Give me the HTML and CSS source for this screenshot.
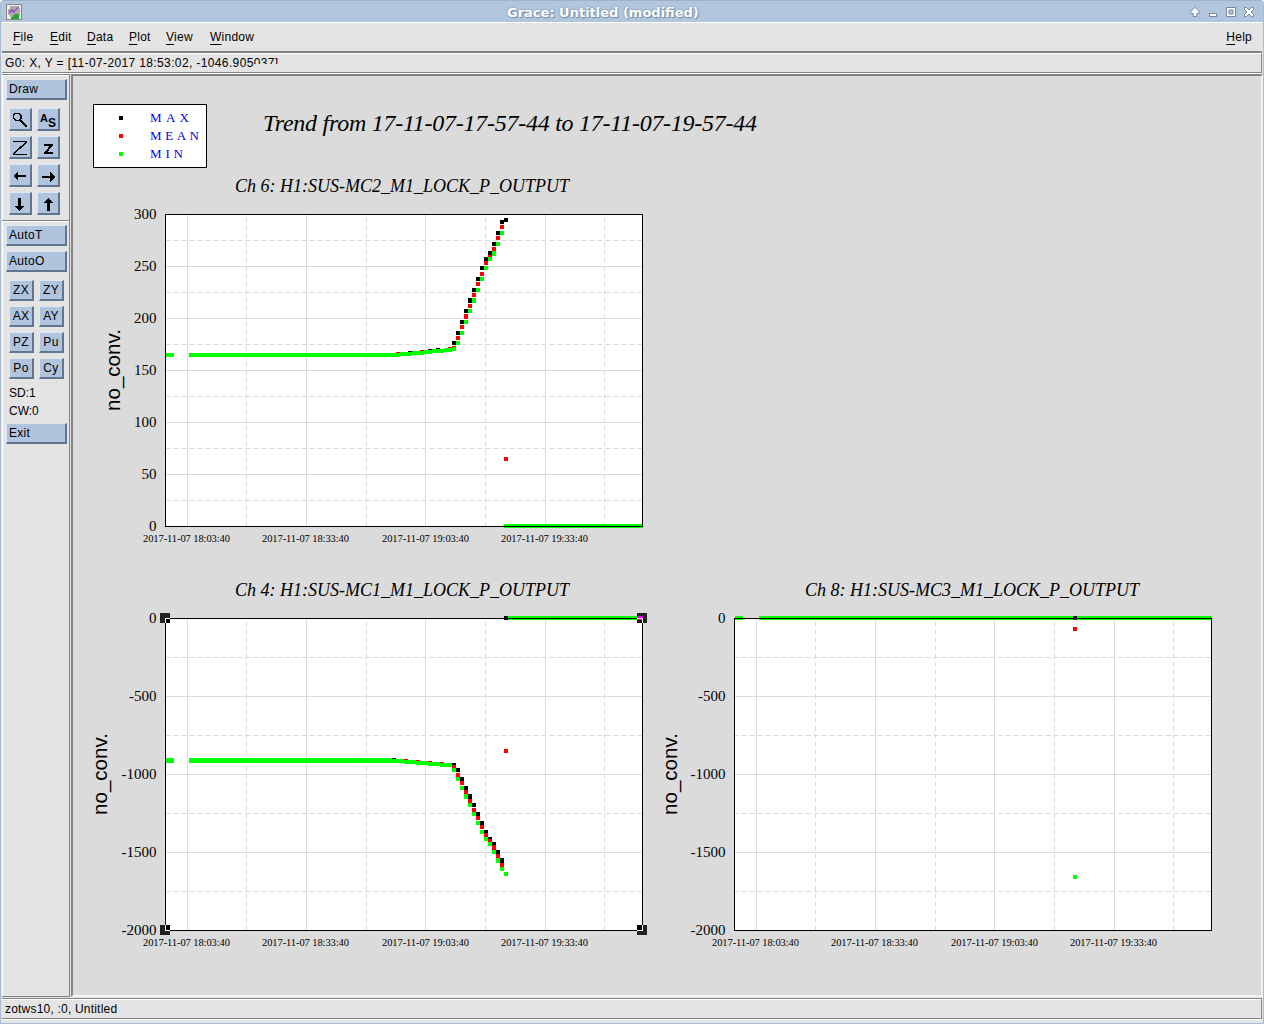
FILE: index.html
```
<!DOCTYPE html>
<html>
<head>
<meta charset="utf-8">
<title>Grace: Untitled (modified)</title>
<link rel="stylesheet" href="styles.css">
</head>
<body>
<div class="window">
  <div class="titlebar">
    <svg class="app-icon" width="16" height="16" shape-rendering="crispEdges">
      <rect width="16" height="16" fill="#8b8580"/>
      <rect x="1" y="1" width="14" height="14" fill="#eee"/>
      <path d="M4 2h9v2h1v7h-2v2H4v-2H2V5h2z" fill="#aaa"/>
      <path d="M3 9l3-3 2 2 4-5" stroke="#9a58c8" fill="none" stroke-width="1.5"/>
      <path d="M5 13h2v-2h2v-1h4v5H5z" fill="#20a530"/>
    </svg>
    <span class="title">Grace: Untitled (modified)</span>
    <svg class="controls" width="66" height="16">
      <g fill="#fff" stroke="#7389a3" stroke-width="1">
        <path d="M6 3.3l4.4 4.4v1.6H7.8v3.2H4.2V9.300H1.600V7.700z"/>
        <rect x="20.500" y="9.500" width="7" height="3"/>
        <path d="M37.500 3.500h9v9h-9zM40 6v4h4V6z" fill-rule="evenodd"/>
        <path d="M55.500 3.500h2l2.500 2.500 2.500-2.500h2v2l-2.500 2.500 2.500 2.500v2h-2l-2.500-2.500-2.500 2.500h-2v-2l2.500-2.500-2.500-2.500z"/>
      </g>
    </svg>
  </div>

  <div class="menubar">
    <span class="file"><u>F</u>ile</span>
    <span class="edit"><u>E</u>dit</span>
    <span class="data"><u>D</u>ata</span>
    <span class="plot"><u>P</u>lot</span>
    <span class="view"><u>V</u>iew</span>
    <span class="win"><u>W</u>indow</span>
    <span class="help"><u>H</u>elp</span>
  </div>

  <div class="locator"><span>G0: X, Y = [11-07-2017 18:53:02, -1046.905</span><span class="cut">037]</span></div>

  <div class="main">
    <div class="toolbar">
      <button class="wide">Draw</button>
      <div class="icons">
        <button><svg width="19" height="19" shape-rendering="crispEdges"><path d="M5 3.500h4l2 2v3l-2 2H6l-2.500-2.500V5z" fill="none" stroke="#000" stroke-width="1.300"/><path d="M9.500 9.500l7.500 7.500" stroke="#000" stroke-width="2.500"/></svg></button>
        <button><svg width="19" height="19"><text x="2" y="12" class="glyph" font-size="11">A</text><text x="10" y="17" class="glyph" font-size="12">S</text></svg></button>
        <button><svg width="19" height="19" shape-rendering="crispEdges"><path d="M3 3.500h14M3 16.500h14M16.500 4L3.500 16" fill="none" stroke="#000" stroke-width="1.500"/></svg></button>
        <button><svg width="19" height="19" shape-rendering="crispEdges"><path d="M6 7h9M6 15h9M14 7L7 15" fill="none" stroke="#000" stroke-width="2"/></svg></button>
        <button><svg width="19" height="19" shape-rendering="crispEdges"><path d="M3 10l5-5v4h8v2H8v4z"/></svg></button>
        <button><svg width="19" height="19" shape-rendering="crispEdges"><path d="M17 11l-5-5v4H4v2h8v4z"/></svg></button>
        <button><svg width="19" height="19" shape-rendering="crispEdges"><path d="M9.500 17l-5-5H8V4h3v8h3.500z"/></svg></button>
        <button><svg width="19" height="19" shape-rendering="crispEdges"><path d="M10.500 4l5 5H12v8H9V9H5.500z"/></svg></button>
      </div>
      <div class="sep"></div>
      <button class="wide">AutoT</button>
      <button class="wide second">AutoO</button>
      <div class="small">
        <button>ZX</button><button>ZY</button>
        <button>AX</button><button>AY</button>
        <button>PZ</button><button>Pu</button>
        <button>Po</button><button>Cy</button>
      </div>
      <div class="state">SD:1</div>
      <div class="state">CW:0</div>
      <button class="wide exit">Exit</button>
    </div>

    <div class="canvas">
      <svg width="1188" height="918" viewBox="73 76 1188 918">
        <defs>
          <!-- grids are drawn from the top left corner of a frame -->
          <g id="xgrid">
            <path class="grid" d="M22.500 0v312M141.500 0v312M260.500 0v312M380.500 0v312"/>
            <path class="grid minor" d="M81.500 313V0M201.500 313V0M320.500 313V0M439.500 313V0"/>
          </g>
          <g id="grid300">
            <path class="grid" d="M0 52.500h477M0 104.500h477M0 156.500h477M0 208.500h477M0 260.500h477"/>
            <path class="grid minor" d="M0 26.500h477M0 78.500h477M0 130.500h477M0 182.500h477M0 234.500h477M0 286.500h477"/>
          </g>
          <g id="grid2000">
            <path class="grid" d="M0 78.500h477M0 156.500h477M0 234.500h477"/>
            <path class="grid minor" d="M0 39.500h477M0 117.500h477M0 195.500h477M0 273.500h477"/>
          </g>
          <g id="dates" class="date">
            <text x="-22" y="328" textLength="87">2017-11-07 18:03:40</text>
            <text x="97" y="328" textLength="87">2017-11-07 18:33:40</text>
            <text x="217" y="328" textLength="87">2017-11-07 19:03:40</text>
            <text x="336" y="328" textLength="87">2017-11-07 19:33:40</text>
          </g>
        </defs>

        <!-- legend -->
        <rect class="frame" x="93.500" y="104.500" width="113" height="63"/>
        <path class="max" d="M119 118h4"/>
        <path class="mean" d="M119 136h4"/>
        <path class="min" d="M119 154h4"/>
        <g class="legend">
          <text x="150" y="122" textLength="39">MAX</text>
          <text x="150" y="140" textLength="49">MEAN</text>
          <text x="150" y="158" textLength="33">MIN</text>
        </g>
        <text class="heading" x="263" y="131" textLength="494">Trend from 17-11-07-17-57-44 to 17-11-07-19-57-44</text>

        <!-- Ch 6 -->
        <text class="subtitle" x="235" y="192" textLength="334">Ch 6: H1:SUS-MC2_M1_LOCK_P_OUTPUT</text>
        <rect class="paper" x="165" y="214" width="478" height="313"/>
        <use href="#xgrid" x="165" y="214"/>
        <use href="#grid300" x="165" y="214"/>
        <path class="max" d="M408 353h4M428 351h4M436 350h4M452 343h4M456 333h4M460 322h4M464 311h4M468 300h4M468 301h4M472 290h4M476 279h4M480 268h4M484 259h4M488 253h4M492 244h4M496 233h4M500 222h4M504 220h4"/>
        <path class="mean" d="M396 354h4M420 352h4M448 349h4M452 348h4M456 338h4M460 327h4M464 316h4M464 317h4M468 306h4M472 295h4M476 284h4M480 274h4M484 263h4M488 257h4M492 249h4M496 238h4M500 227h4M504 459h4"/>
        <path class="min" d="M166 355h8M189 355h211M400 354h12M412 353h12M424 352h8M432 351h12M444 350h8M452 349h4M456 343h4M460 333h4M464 322h4M468 311h4M472 300h4M472 301h4M476 290h4M480 279h4M484 268h4M488 259h4M492 253h4M492 254h4M496 244h4M500 233h4M504 526h139"/>
        <rect class="outline" x="165.500" y="214.500" width="477" height="312"/>
        <g class="tick">
          <text x="156.500" y="219">300</text>
          <text x="156.500" y="271">250</text>
          <text x="156.500" y="323">200</text>
          <text x="156.500" y="375">150</text>
          <text x="156.500" y="427">100</text>
          <text x="156.500" y="479">50</text>
          <text x="156.500" y="531">0</text>
        </g>
        <use href="#dates" x="165" y="214"/>
        <text class="ylabel" transform="translate(120 411) rotate(-90)" textLength="82">no_conv.</text>

        <!-- Ch 4 -->
        <text class="subtitle" x="235" y="596" textLength="334">Ch 4: H1:SUS-MC1_M1_LOCK_P_OUTPUT</text>
        <rect class="paper" x="165" y="618" width="478" height="313"/>
        <use href="#xgrid" x="165" y="618"/>
        <use href="#grid2000" x="165" y="618"/>
        <path class="max" d="M392 760h4M452 765h4M456 770h4M460 779h4M464 788h4M468 796h4M468 797h4M472 805h4M476 814h4M480 823h4M484 832h4M488 839h4M492 844h4M496 852h4M500 860h4M500 861h4"/>
        <path class="mean" d="M404 761h4M416 762h4M428 763h4M440 764h4M452 767h4M456 775h4M460 783h4M464 792h4M468 801h4M472 810h4M476 818h4M480 827h4M484 835h4M488 841h4M492 847h4M492 848h4M496 856h4M500 865h4M504 751h4"/>
        <path class="min" d="M166 760h8M166 761h8M189 760h203M189 761h215M404 762h12M416 763h12M428 764h12M440 765h12M452 770h4M456 779h4M460 788h4M464 796h4M464 797h4M468 805h4M472 814h4M476 823h4M480 832h4M484 839h4M488 844h4M492 852h4M496 860h4M496 861h4M500 869h4M504 874h4M508 618h135"/>
        <path class="max" d="M504 618h4"/>
        <rect class="outline" x="165.500" y="618.500" width="477" height="312"/>
        <g class="handle">
          <path class="grip" d="M160 613h10v10h-10zM637 613h10v10h-10zM160 925h10v10h-10zM637 925h10v10h-10z"/>
          <path d="M166 619h4v4h-4zM637 619h5v4h-5zM166 925h4v5h-4zM637 925h5v5h-5z"/>
          <path class="rim" d="M165.500 623v-4.500h4.500M637 618.500h5.500v4.500M165.500 925v5.500h4.500M637 930.500h5.500v-5.500"/>
          <path fill="#f0f" d="M637 616h6v2h-6zM637 619h5v1h-5z"/>
        </g>
        <g class="tick">
          <text x="156.500" y="623">0</text>
          <text x="156.500" y="701">-500</text>
          <text x="156.500" y="779">-1000</text>
          <text x="156.500" y="857">-1500</text>
          <text x="156.500" y="935">-2000</text>
        </g>
        <use href="#dates" x="165" y="618"/>
        <text class="ylabel" transform="translate(107 815) rotate(-90)" textLength="82">no_conv.</text>

        <!-- Ch 8 -->
        <text class="subtitle" x="805" y="596" textLength="334">Ch 8: H1:SUS-MC3_M1_LOCK_P_OUTPUT</text>
        <rect class="paper" x="734" y="618" width="478" height="313"/>
        <use href="#xgrid" x="734" y="618"/>
        <use href="#grid2000" x="734" y="618"/>
        <path class="min" d="M735 618h8M759 618h453M1073 877h4"/>
        <path class="mean" d="M1073 629h4"/>
        <path class="max" d="M1073 618h4"/>
        <rect class="outline" x="734.500" y="618.500" width="477" height="312"/>
        <g class="tick">
          <text x="725.500" y="623">0</text>
          <text x="725.500" y="701">-500</text>
          <text x="725.500" y="779">-1000</text>
          <text x="725.500" y="857">-1500</text>
          <text x="725.500" y="935">-2000</text>
        </g>
        <use href="#dates" x="734" y="618"/>
        <text class="ylabel" transform="translate(677 815) rotate(-90)" textLength="82">no_conv.</text>
      </svg>
    </div>
  </div>

  <div class="status">zotws10, :0, Untitled</div>
</div>
</body>
</html>
```

FILE: styles.css
```
* {
  box-sizing: border-box;
}

body {
  margin: 0;
  background: #fff;
  font-family: "Liberation Sans", Arial, sans-serif;
  font-size: 12px;
  color: #000;
}

.window {
  display: flex;
  flex-direction: column;
  width: 1264px;
  height: 1024px;
  padding: 0 1px 2px;
  background: #e4e4e4;
  border: solid #a9bcd2;
  border-width: 0 1px 1px;
  border-radius: 4px 4px 0 0;
  overflow: hidden;
}

/* title bar */
.titlebar {
  display: flex;
  align-items: center;
  flex: none;
  height: 22px;
  margin: 0 -1px;
  padding: 1px 8px 0 5px;
  background: #b1c6dc;
  border-top: 1px solid #9fb2c7;
}

.title {
  margin-left: 485px;
  font: bold 13px "DejaVu Sans", sans-serif;
  color: #fff;
  text-shadow: 0 0 2px #6c86a5, 1px 1px 1px #7890ac;
}

.controls {
  margin-left: auto;
}

/* menus */
.menubar {
  display: flex;
  flex: none;
  height: 31px;
  padding: 7px 10px 0 11px;
  border-top: 1px solid #fff;
  border-bottom: 2px solid #838383;
  line-height: 15px;
  letter-spacing: 0.25px;
}

.menubar u {
  text-underline-offset: 3px;
  text-decoration-thickness: 1px;
}

.file { width: 37px; }
.edit { width: 37px; }
.data { width: 42px; }
.plot { width: 37px; }
.view { width: 44px; }
.help { margin-left: auto; }

.locator {
  flex: none;
  display: flex;
  height: 20px;
  padding: 2px 3px 0;
  border-top: 1px solid #fff;
  border-right: 1px solid #838383;
  border-bottom: 1px solid #838383;
  line-height: 15px;
  letter-spacing: 0.37px;
}

/* tail of the readout that has not been fully repainted */
.cut {
  position: relative;
}

.cut::after {
  content: "";
  position: absolute;
  left: 0;
  right: 0;
  top: 8px;
  height: 7px;
  background: #e4e4e4;
}

/* work area */
.main {
  display: flex;
  flex: none;
  height: 925px;
  border-top: 1px solid #fff;
}

.toolbar {
  display: flex;
  flex-direction: column;
  width: 68px;
  height: 923px;
  padding: 4px 2px 0 3px;
  border: solid #838383;
  border-width: 1px 1px 1px 0;
  box-shadow: inset 1px 1px #fff;
}

button {
  display: block;
  margin: 0;
  padding: 0 0 1px 1px;
  background: #b0c4de;
  border: solid;
  border-width: 1px 2px 2px 1px;
  border-color: #dde8f3 #62758e #62758e #dde8f3;
  font: 12px/16px "Liberation Sans", Arial, sans-serif;
  letter-spacing: 0.3px;
  color: #000;
}

.wide {
  flex: none;
  width: 61px;
  height: 21px;
  margin-left: 1px;
  padding-left: 2px;
  text-align: left;
}

.icons {
  display: grid;
  grid-template-columns: 23px 23px;
  gap: 5px;
  padding: 8px 0 0 4px;
}

.icons button {
  height: 23px;
  padding: 0;
}

.icons svg {
  display: block;
}

.glyph {
  font-family: "Liberation Sans", Arial, sans-serif;
  font-weight: bold;
}

.sep {
  flex: none;
  height: 2px;
  margin: 5px -2px 3px -3px;
  background: #fff;
  border-top: 1px solid #838383;
}

.second {
  margin-top: 5px;
}

.small {
  display: grid;
  grid-template-columns: 25px 25px;
  gap: 5px;
  padding: 8px 0 5px 4px;
}

.small button {
  height: 21px;
  padding-left: 0;
}

.state {
  height: 18px;
  padding-left: 4px;
  line-height: 18px;
}

.exit {
  margin-top: 3px;
}

.canvas {
  margin-left: 1px;
  width: 1192px;
  height: 923px;
  background: #dbdbdb;
  border: solid;
  border-width: 2px 2px 2px 2px;
  border-color: #838383 #f3f3f3 #f3f3f3 #838383;
}

.canvas svg {
  display: block;
  shape-rendering: crispEdges;
}

.status {
  flex: none;
  height: 21px;
  padding: 3px 3px 0;
  border: 1px solid #838383;
  border-left: 0;
  box-shadow: inset 0 1px #fff, 0 1px #fff;
  line-height: 15px;
  letter-spacing: 0.2px;
}

/* plots */
.frame {
  fill: #fff;
  stroke: #000;
}

.paper {
  fill: #fff;
}

.outline {
  fill: none;
  stroke: #000;
}

.grid {
  stroke: #dbdbdb;
}

.minor {
  stroke-dasharray: 5 3;
}

.max,
.mean,
.min {
  fill: none;
  stroke-width: 4px;
}

.max { stroke: #000; }
.mean { stroke: #f00; }
.min { stroke: #0f0; }

.grip {
  fill: #222;
}

.rim {
  fill: none;
  stroke: #fff;
}

.canvas text {
  font-family: "Liberation Serif", "Times New Roman", serif;
}

.legend {
  fill: #00e;
  font-size: 13px;
}

.heading {
  font-size: 24px;
  font-style: italic;
}

.subtitle {
  font-size: 18px;
  font-style: italic;
}

.tick {
  font-size: 15px;
  text-anchor: end;
}

.date {
  font-size: 10.5px;
}

.canvas .ylabel {
  font-family: "Liberation Sans", Arial, sans-serif;
  font-size: 20.5px;
}
```
